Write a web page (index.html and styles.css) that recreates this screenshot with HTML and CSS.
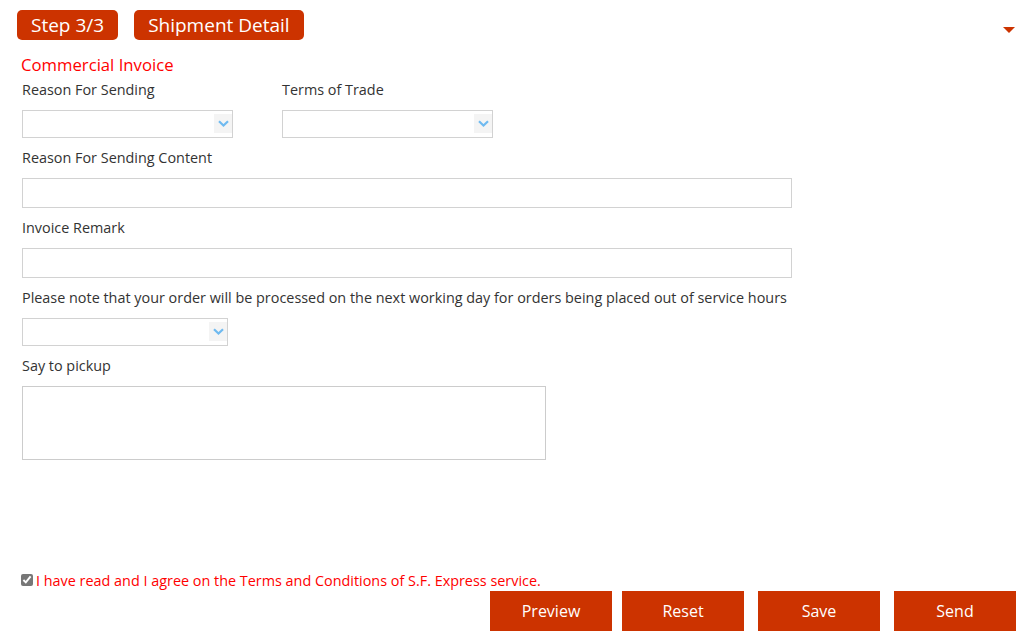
FILE: index.html
```html
<!DOCTYPE html>
<html>
<head>
<meta charset="utf-8">
<link rel="stylesheet" href="styles.css">
</head>
<body>
<div class="page">
  <div class="header">
    <span class="badge">Step 3/3</span>
    <span class="badge">Shipment Detail</span>
    <span class="caret"></span>
  </div>
  <div class="form">
    <div class="section-title">Commercial Invoice</div>
    <div class="row">
      <div class="field">
        <div class="label">Reason For Sending</div>
        <div class="select w211"><span class="arrow"><svg width="11" height="7" viewBox="0 0 11 7"><path d="M1 1.2 L5.5 5.5 L10 1.2" fill="none" stroke="#6fbaf0" stroke-width="2.2"/></svg></span></div>
      </div>
      <div class="field">
        <div class="label">Terms of Trade</div>
        <div class="select w211"><span class="arrow"><svg width="11" height="7" viewBox="0 0 11 7"><path d="M1 1.2 L5.5 5.5 L10 1.2" fill="none" stroke="#6fbaf0" stroke-width="2.2"/></svg></span></div>
      </div>
    </div>
    <div class="label">Reason For Sending Content</div>
    <div class="input"></div>
    <div class="label">Invoice Remark</div>
    <div class="input"></div>
    <div class="label">Please note that your order will be processed on the next working day for orders being placed out of service hours</div>
    <div class="select w206"><span class="arrow"><svg width="11" height="7" viewBox="0 0 11 7"><path d="M1 1.2 L5.5 5.5 L10 1.2" fill="none" stroke="#6fbaf0" stroke-width="2.2"/></svg></span></div>
    <div class="label">Say to pickup</div>
    <div class="textarea"></div>
  </div>
  <div class="agree">
    <input type="checkbox" checked class="check">
    <span>I have read and I agree on the Terms and Conditions of S.F. Express service.</span>
  </div>
  <div class="actions">
    <button class="btn">Preview</button>
    <button class="btn gap10">Reset</button>
    <button class="btn">Save</button>
    <button class="btn">Send</button>
  </div>
</div>
</body>
</html>
```
FILE: styles.css
```css
* { box-sizing: border-box; }
html, body { margin: 0; padding: 0; background: #fff; }
body {
  font-family: "Open Sans", "Noto Sans", "Liberation Sans", sans-serif;
  font-size: 14.4px;
  color: #333;
}
.page { width: 1034px; height: 641px; }
.header {
  display: flex;
  align-items: flex-start;
  padding: 10px 19px 0 17px;
  gap: 16px;
}
.badge {
  display: inline-block;
  height: 30px;
  line-height: 30px;
  padding: 0 14px;
  background: #cc3300;
  color: #fff;
  font-size: 19px;
  border-radius: 5px;
}
.caret {
  margin-left: auto;
  margin-top: 17px;
  width: 0;
  height: 0;
  border-left: 6px solid transparent;
  border-right: 6px solid transparent;
  border-top: 6px solid #cc3300;
}
.form { padding-left: 22px; }
.section-title {
  color: #ff0000;
  font-size: 16.7px;
  line-height: 20px;
  margin: 15px 0 0 -1px;
}
.row { display: flex; gap: 49px; margin-top: 5px; }
.label { line-height: 20px; margin-bottom: 10px; white-space: nowrap; }
.row .label { margin-bottom: 10px; }
.select {
  position: relative;
  height: 28px;
  border: 1px solid #d2d2d2;
  margin-bottom: 10px;
  background: #fff;
}
.w211 { width: 211px; }
.w206 { width: 206px; }
.arrow {
  position: absolute;
  right: 0;
  top: 3px;
  width: 18px;
  height: 19px;
  background: #f4f4f4;
  display: flex;
  align-items: center;
  justify-content: center;
}
.input {
  width: 770px;
  height: 30px;
  border: 1px solid #d2d2d2;
  margin-bottom: 10px;
}
.textarea {
  width: 524px;
  height: 74px;
  border: 1px solid #cccccc;
}
.agree {
  display: flex;
  align-items: center;
  margin-top: 110px;
  padding-left: 21px;
  height: 20px;
  color: #ff0000;
  font-size: 14.4px;
}
.check {
  width: 12px;
  height: 12px;
  margin: 0 3px 0 0;
  accent-color: #777;
}
.actions {
  display: flex;
  justify-content: flex-end;
  gap: 14px;
  padding-right: 18px;
  margin-top: 1px;
}
.btn {
  width: 122px;
  height: 40px;
  border: 0;
  background: #cc3300;
  color: #fff;
  font-family: inherit;
  font-size: 16px;
  padding: 0;
}
.gap10 { margin-left: -4px; }
```
